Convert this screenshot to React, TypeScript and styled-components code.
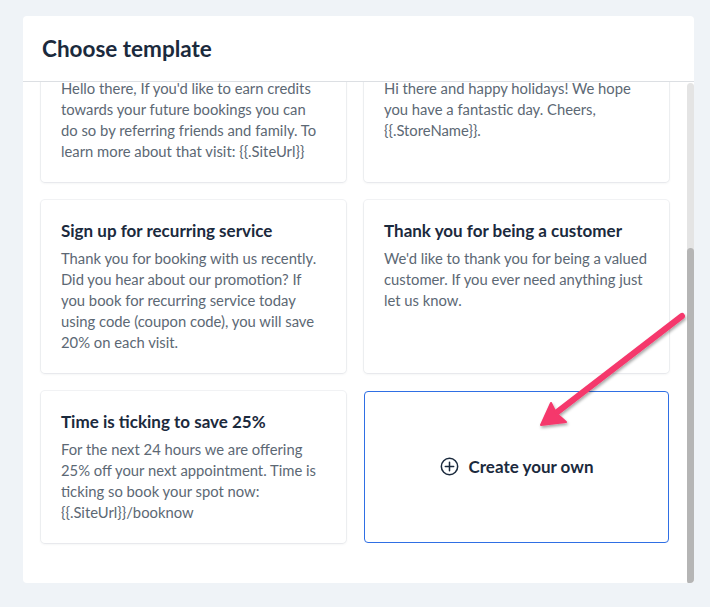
import { useLayoutEffect, useRef, useState } from 'react'
import styled, { createGlobalStyle } from 'styled-components'

type Template = {
  title: string
  body: string
}

const templates: Template[] = [
  {
    title: 'Welcome to the family',
    body: 'Thanks for choosing {{.StoreName}}! We are so happy to have you. Book your next visit any time at {{.SiteUrl}}',
  },
  {
    title: 'We miss you',
    body: "It's been a while since your last visit. Come back and see us soon, we'd love to help again.",
  },
  {
    title: 'Refer a friend',
    body: "Hello there, If you'd like to earn credits towards your future bookings you can do so by referring friends and family. To learn more about that visit: {{.SiteUrl}}",
  },
  {
    title: 'Happy holidays',
    body: 'Hi there and happy holidays! We hope you have a fantastic day. Cheers, {{.StoreName}}.',
  },
  {
    title: 'Sign up for recurring service',
    body: 'Thank you for booking with us recently. Did you hear about our promotion? If you book for recurring service today using code (coupon code), you will save 20% on each visit.',
  },
  {
    title: 'Thank you for being a customer',
    body: "We'd like to thank you for being a valued customer. If you ever need anything just let us know.",
  },
  {
    title: 'Time is ticking to save 25%',
    body: 'For the next 24 hours we are offering 25% off your next appointment. Time is ticking so book your spot now: {{.SiteUrl}}/booknow',
  },
]

type Thumb = { top: number; height: number }

export default function App() {
  const scrollRef = useRef<HTMLDivElement>(null)
  const [thumb, setThumb] = useState<Thumb>({ top: 0, height: 0 })

  const measure = () => {
    const el = scrollRef.current
    if (!el) return
    const track = el.clientHeight
    setThumb({
      top: (el.scrollTop / el.scrollHeight) * track,
      height: (el.clientHeight / el.scrollHeight) * track,
    })
  }

  // The screenshot shows the list scrolled all the way down.
  useLayoutEffect(() => {
    const el = scrollRef.current
    if (el) el.scrollTop = el.scrollHeight
    measure()
  }, [])

  return (
    <>
      <GlobalStyle />
      <Page>
        <Panel>
          <Header>
            <h1>Choose template</h1>
          </Header>
          <Body>
            <ScrollArea ref={scrollRef} onScroll={measure}>
              <Grid>
                {templates.map((t) => (
                  <TemplateCard key={t.title}>
                    <CardTitle>{t.title}</CardTitle>
                    <CardBody>{t.body}</CardBody>
                  </TemplateCard>
                ))}
                <CreateCard type="button">
                  <PlusIcon />
                  Create your own
                </CreateCard>
              </Grid>
            </ScrollArea>
            <ScrollTrack>
              <ScrollThumb style={{ top: thumb.top, height: thumb.height }} />
            </ScrollTrack>
          </Body>
        </Panel>
        <Annotation width="710" height="607" viewBox="0 0 710 607" aria-hidden>
          <defs>
            <filter id="arrowShadow" x="-20%" y="-20%" width="140%" height="140%">
              <feDropShadow dx="1" dy="2" stdDeviation="1.5" floodColor="#000" floodOpacity="0.35" />
            </filter>
          </defs>
          <g filter="url(#arrowShadow)" fill="#f5386c" stroke="#f5386c">
            <line x1="682" y1="316" x2="556" y2="413" strokeWidth="6" strokeLinecap="round" />
            <path d="M541 425 L551 403 L556 413 L566 422 Z" strokeWidth="2" strokeLinejoin="round" />
          </g>
        </Annotation>
      </Page>
    </>
  )
}

function PlusIcon() {
  return (
    <svg width="19" height="19" viewBox="0 0 20 20" fill="none" stroke="#1b2a3d" strokeWidth="1.6">
      <circle cx="10" cy="10" r="8.6" />
      <path d="M10 5.6v8.8M5.6 10h8.8" strokeLinecap="round" />
    </svg>
  )
}

const GlobalStyle = createGlobalStyle`
  html, body {
    margin: 0;
    padding: 0;
    background: #eff3f7;
    font-family: Lato, "Open Sans", "Liberation Sans", sans-serif;
  }
`

const Page = styled.div`
  position: relative;
  width: 710px;
  height: 607px;
  box-sizing: border-box;
  padding: 16px 16px 24px 23px;
`

const Panel = styled.div`
  display: flex;
  flex-direction: column;
  height: 100%;
  background: #fff;
  border-radius: 4px;
  overflow: hidden;
`

const Header = styled.div`
  flex: none;
  height: 66px;
  box-sizing: border-box;
  padding: 0 19px;
  display: flex;
  align-items: center;
  border-bottom: 1px solid #dcdfe3;

  h1 {
    margin: 0;
    padding-bottom: 1px;
    font-size: 22.5px;
    font-weight: 700;
    color: #1b2a3d;
  }
`

const Body = styled.div`
  flex: 1;
  min-height: 0;
  display: flex;
`

const ScrollArea = styled.div`
  flex: 1;
  overflow-y: scroll;
  scrollbar-width: none;

  &::-webkit-scrollbar {
    display: none;
  }
`

const ScrollTrack = styled.div`
  position: relative;
  flex: none;
  width: 7px;
  margin-top: 1px;
  background: #e4e4e4;
  border-radius: 4px;
`

const ScrollThumb = styled.div`
  position: absolute;
  left: 0;
  right: 0;
  background: #b5b5b5;
  border-radius: 4px;
`

const Grid = styled.div`
  display: grid;
  grid-template-columns: 1fr 1fr;
  gap: 18px;
  padding: 24px 18px 40px 18px;
`

const TemplateCard = styled.div`
  padding: 20px;
  background: #fff;
  border-radius: 4px;
  box-shadow: 0 0 0 1px rgba(20, 40, 70, 0.05), 0 1px 3px rgba(20, 40, 70, 0.08);
  min-height: 152px;
  box-sizing: border-box;
`

const CardTitle = styled.div`
  font-size: 17px;
  line-height: 22px;
  font-weight: 700;
  color: #1b2a3d;
  margin-bottom: 6px;
`

const CardBody = styled.p`
  margin: 0;
  font-size: 14.8px;
  line-height: 21px;
  color: #5c6874;
`

const CreateCard = styled.button`
  display: flex;
  align-items: center;
  justify-content: center;
  gap: 10px;
  background: #fff;
  border: 1px solid #2f6fe4;
  border-radius: 4px;
  font-family: inherit;
  font-size: 17px;
  font-weight: 700;
  color: #1b2a3d;
  cursor: pointer;
  padding: 0 0 2px;
`

const Annotation = styled.svg`
  position: absolute;
  top: 0;
  left: 0;
  pointer-events: none;
`
